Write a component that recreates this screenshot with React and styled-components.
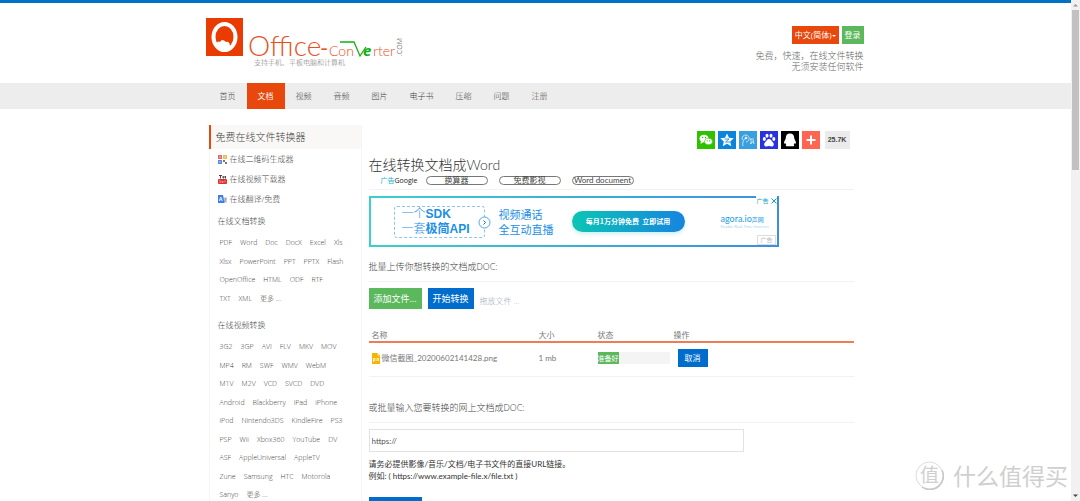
import React from "react";
import styled, { createGlobalStyle, css } from "styled-components";

const orange = "#e8480c";
const blue = "#006dcc";
const green = "#5cb85c";

const Global = createGlobalStyle`
  * { box-sizing: border-box; }
  body {
    margin: 0;
    background: #fff;
    color: #444;
    font: 300 8px/12px "Open Sans", "Noto Sans CJK SC", sans-serif;
  }
  button, input { font: inherit; border: 0; padding: 0; margin: 0; }
  button { cursor: pointer; white-space: nowrap; }
  a { color: inherit; text-decoration: none; }
  ul, h1, h2, h3, p { margin: 0; padding: 0; list-style: none; font-weight: inherit; font-size: inherit; }
`;

const Window = styled.div`
  display: flex;
  height: 100vh;
  overflow: hidden;
  position: relative;
`;

const Page = styled.div`
  flex: 1;
  min-width: 0;
  border-top: 3px solid #0072c6;
`;

const ScrollBar = styled.div`
  width: 9px;
  background: #f1f1f1;
  display: flex;
  flex-direction: column;
  align-items: center;
  padding: 3px 0;
  svg { display: block; }
`;

const Thumb = styled.div`
  width: 7px;
  height: 160px;
  margin: 3px 0 auto;
  background: #c1c1c1;
`;

const Container = styled.div`
  max-width: 656px;
  margin: 0 auto;
`;

const Header = styled(Container)`
  display: flex;
  justify-content: space-between;
  height: 80px;
  padding-top: 14px;
`;

const LogoLink = styled.a`
  margin-left: -2px;
  svg { display: block; }
`;

const HeaderSide = styled.div`
  display: flex;
  flex-direction: column;
  align-items: flex-end;
  padding-top: 9px;
`;

const HeaderButtons = styled.div`
  display: flex;
  gap: 3px;
  margin-bottom: 6px;
`;

const Button = styled.button`
  background: ${(p) => p.$bg};
  color: #fff;
  font-weight: 400;
  height: 18px;
  padding: 0 3px;
  ${(p) => p.$large && css`
    height: 21px;
    font-size: 9px;
    padding: 0 5px;
  `}
`;

const Caret = styled.span`
  display: inline-block;
  vertical-align: middle;
  border: 2px solid transparent;
  border-top-color: #fff;
  border-bottom: 0;
`;

const Slogan = styled.p`
  font-size: 9px;
  line-height: 11px;
  text-align: right;
  color: #666;
`;

const NavBar = styled.nav`
  background: #ededed;
`;

const NavList = styled(Container).attrs({ as: "ul" })`
  display: flex;
  padding-left: 1px;
`;

const NavLink = styled.a`
  display: block;
  padding: 0 11px;
  line-height: 26px;
  font-weight: ${(p) => (p.$active ? 400 : 300)};
  color: ${(p) => (p.$active ? "#fff" : "#444")};
  background: ${(p) => (p.$active ? orange : "transparent")};
`;

const Columns = styled(Container)`
  display: flex;
  align-items: flex-start;
  padding: 16px 10px 0 1px;
  gap: 7px;
`;

const Sidebar = styled.aside`
  width: 153px;
  flex: none;
  border: 1px solid #f5f5f5;
  border-top: 0;
  padding-bottom: 40px;
`;

const SideTitle = styled.h2`
  margin-left: -1px;
  border-left: 2px solid ${orange};
  background: #faf8f7;
  padding-left: 5px;
  font-size: 10px;
  line-height: 24px;
`;

const ToolLink = styled.a`
  display: flex;
  align-items: center;
  gap: 3px;
  height: 20px;
  padding-left: 8px;
  svg { display: block; flex: none; }
`;

const GroupTitle = styled.h3`
  padding: ${(p) => (p.$first ? "6px" : "11px")} 0 7px 8px;
  line-height: 12px;
`;

const TagRow = styled.li`
  display: flex;
  align-items: center;
  gap: 8px;
  height: 18px;
  padding-left: 10px;
  font-size: 7px;
  white-space: nowrap;
  &:nth-child(even) { height: 19px; }
`;

const Main = styled.main`
  flex: 1;
  min-width: 0;
`;

const Share = styled.div`
  display: flex;
  justify-content: flex-end;
  gap: 3px;
  padding: 6px 4px 5px 0;
`;

const ShareButton = styled.button`
  width: 18px;
  height: 18px;
  background: ${(p) => p.$bg};
  svg { display: block; }
`;

const Count = styled.span`
  width: 25px;
  margin-left: 2px;
  background: #ebebeb;
  color: #444;
  font: 700 7px/18px "Liberation Sans", sans-serif;
  text-align: center;
`;

const Title = styled.h1`
  font: 300 14px/22px Lato, "Noto Sans CJK SC", sans-serif;
  color: #333;
`;

const LinkUnits = styled.div`
  display: flex;
  align-items: center;
  gap: 11px;
  height: 14px;
  padding: 0 0 4px 12px;
  border-bottom: 1px solid #f2f2f2;
  margin-bottom: 6px;
`;

const AdMark = styled.span`
  width: 34px;
  font: 400 7px/9px "Open Sans", "Noto Sans CJK SC", sans-serif;
  color: #222;
  white-space: nowrap;
  b { font-weight: 400; color: #1aaed0; }
`;

const Pill = styled.a`
  width: 62px;
  height: 9px;
  border: 1px solid #777;
  border-radius: 5px;
  font: 400 8px/7px Lato, "Noto Sans CJK SC", sans-serif;
  text-align: center;
  white-space: nowrap;
`;

const Banner = styled.section`
  position: relative;
  display: flex;
  align-items: center;
  width: 410px;
  height: 51px;
  padding-left: 23px;
  border: 2px solid;
  border-image: linear-gradient(90deg, #3bd0cb, #3a8fe0) 1;
  color: #1a8fe6;
`;

const Sdk = styled.div`
  position: relative;
  width: 91px;
  height: 32px;
  padding-left: 7px;
  border: 1px dashed #8cc4ee;
  border-radius: 3px;
  font: 300 12px/15px "Liberation Sans", "Noto Sans CJK SC", sans-serif;
  white-space: nowrap;
  b { font-weight: 700; }
`;

const Arrow = styled.svg`
  position: absolute;
  right: -7px;
  top: 9px;
`;

const Talk = styled.p`
  margin: 0 18px 0 14px;
  font: 400 11px/15px "Noto Sans CJK SC", sans-serif;
`;

const Cta = styled.button`
  width: 113px;
  height: 21px;
  border-radius: 11px;
  background: linear-gradient(90deg, #0cc5b4, #1685e0);
  box-shadow: 0 2px 4px #cdeef2;
  color: #fff;
  font: 700 7px/21px "Noto Sans CJK SC", sans-serif;
`;

const Agora = styled.div`
  margin-left: 36px;
  font: 400 6px/8px "Noto Sans CJK SC", sans-serif;
  color: #22a0e4;
  b { font: 400 9px/10px Lato, sans-serif; }
  small { display: block; font: 400 4px/5px "Open Sans", sans-serif; color: #8fd0ee; }
`;

const AdChoice = styled.span`
  position: absolute;
  right: 0;
  top: -2px;
  display: flex;
  align-items: center;
  gap: 2px;
  font: 400 6px/9px "Noto Sans CJK SC", sans-serif;
  background: #fff;
  color: #12a5c4;
`;

const AdLabel = styled.span`
  position: absolute;
  right: 1px;
  bottom: 0;
  border: 1px solid #ddd;
  padding: 0 2px;
  font: 400 6px/8px "Noto Sans CJK SC", sans-serif;
  color: #bbb;
`;

const Lead = styled.label`
  display: block;
  padding: ${(p) => (p.$first ? "13px" : "24px")} 0 8px;
  border-bottom: 1px solid #f2f2f2;
  margin-bottom: 6px;
  font-size: 9px;
  line-height: 13px;
`;

const Actions = styled.div`
  display: flex;
  gap: 6px;
  align-items: center;
  margin-bottom: 21px;
`;

const Hint = styled.span`
  padding-top: 4px;
  color: #a3acbb;
`;

const FileTable = styled.table`
  width: 100%;
  table-layout: fixed;
  border-collapse: collapse;
  font: 400 8px/12px Lato, "Noto Sans CJK SC", sans-serif;
  color: #777;
  th { font-weight: 400; text-align: left; line-height: 11px; padding: 0 0 0 3px; border-bottom: 2px solid #ee7d55; }
  td { height: 34px; padding: 0 0 2px 3px; border-bottom: 1px solid #f2f2f2; }
  th:nth-child(2) { width: 59px; }
  th:nth-child(3) { width: 76px; }
  th:nth-child(4) { width: 183px; }
  td:nth-child(4) { padding-left: 7px; }
`;

const FileName = styled.span`
  display: flex;
  align-items: center;
  gap: 2px;
  svg { display: block; }
`;

const Progress = styled.div`
  width: 72px;
  background: #f4f4f4;
  color: #fff;
  font-size: 7px;
  line-height: 12px;
  span { display: block; width: 21px; background: ${green}; white-space: nowrap; }
`;

const CancelButton = styled(Button)`
  width: 30px;
`;

const UrlInput = styled.input`
  display: block;
  width: 375px;
  height: 23px;
  padding: 1px 2px 0;
  border: 1px solid #e2e2e2;
  background: #fff;
  color: #555;
  font: 400 8px/12px Lato, sans-serif;
`;

const Note = styled.p`
  padding: 6px 0 15px;
  font: 400 8px/12px Lato, "Noto Sans CJK SC", sans-serif;
  color: #333;
`;

const Watermark = styled.div`
  position: absolute;
  right: 12px;
  bottom: 9px;
  display: flex;
  align-items: center;
  gap: 9px;
  font: 400 23px/34px "Noto Sans CJK SC", sans-serif;
  color: #cfcfcf;
  svg { display: block; }
`;

const Logo = () => (
  <svg width="204" height="52" viewBox="0 0 204 52" role="img" aria-label="Office-Converter.com">
    <rect x="0" y="1" width="37" height="38" fill="#e93b02" />
    <ellipse cx="18.500" cy="20" rx="11" ry="13" fill="none" stroke="#fff" strokeWidth="4" />
    <path d="M10 29 q1-6 4-4 q2-4 6 0 q4-1 4 5 q3-3 3-4 l1 3 q-4 6-10 6 q-5 0-8-6z" fill="#fff" />
    <g fill="#e8501a" fontFamily="Lato, sans-serif" fontWeight="300">
      <text x="42" y="39" fontSize="28">Office</text>
      <text x="114" y="39" fontSize="22" fontWeight="400">-</text>
      <text x="123" y="39" fontSize="14">Con</text>
      <text x="167" y="39" fontSize="14">rter</text>
    </g>
    <path d="M134 25h14l6 14l6-9" fill="none" stroke="#12b012" strokeWidth="1.300" />
    <text x="157" y="39" fontFamily="Open Sans, sans-serif" fontWeight="700" fontStyle="italic" fontSize="15" fill="#12b012">e</text>
    <text transform="translate(196 39) rotate(-90)" fontFamily="Open Sans, sans-serif" fontSize="7" fontWeight="400" fill="#777">.COM</text>
    <text x="48" y="48" fontFamily="Noto Sans CJK SC, sans-serif" fontSize="7" fontWeight="300" fill="#777">支持手机、平板电脑和计算机</text>
  </svg>
);

const shareItems = [
  ["微信", "#2dc100", <g fill="#fff"><ellipse cx="7" cy="7.500" rx="4.500" ry="3.800" /><path d="M4 10l-.5 3 3-2z" /><ellipse cx="11.500" cy="10.500" rx="4" ry="3.300" stroke="#2dc100" strokeWidth=".6" /><g fill="#2dc100"><circle cx="5.500" cy="6.500" r=".7" /><circle cx="8.500" cy="6.500" r=".7" /><circle cx="10.200" cy="9.800" r=".6" /><circle cx="12.800" cy="9.800" r=".6" /></g></g>],
  ["QQ空间", "#0985dd", <g><path d="M9 2.500l2 4.300 4.800.5-3.600 3.200 1.100 4.700L9 12.800l-4.300 2.400 1.100-4.700-3.600-3.200 4.800-.5z" fill="#fff" /><path d="M6.500 8h4.500l-3.500 3h4.500" fill="none" stroke="#0985dd" strokeWidth=".8" /></g>],
  ["腾讯微博", "#3a9fdf", <g fill="none" stroke="#e4f4ff" strokeWidth=".8"><path d="M4 15c-1-4 1-7 3-8" /><path d="M3.500 9a3.500 3.500 0 1 1 3.500 2" /><circle cx="7" cy="7" r="1" fill="#fff" /><path d="M11 8h4M12 8v5M11 13l4-3M14 9l1 4" /></g>],
  ["百度", "#2932e1", <g fill="#fff"><ellipse cx="4.300" cy="8" rx="1.500" ry="2" /><ellipse cx="7" cy="4.800" rx="1.500" ry="2" /><ellipse cx="11" cy="4.800" rx="1.500" ry="2" /><ellipse cx="13.800" cy="8" rx="1.500" ry="2" /><path d="M9 8c2 0 2.500 2 4 3.500s.8 4-1.200 4c-1 0-1.800-.4-2.800-.4s-1.800.4-2.800.4c-2 0-2.700-2.500-1.200-4S7 8 9 8z" /></g>],
  ["QQ", "#000", <path d="M9 2.500c3 0 4.200 2 4.200 4.500 0 1 1.800 3 1.800 5 0 .8-.8.8-1.300 0-.2.700-.5 1.300-1 1.800 1 .8.500 1.500-1.200 1.500H6.500c-1.700 0-2.200-.7-1.200-1.500-.5-.5-.8-1.100-1-1.800-.5.800-1.300.8-1.300 0 0-2 1.800-4 1.800-5C4.800 4.500 6 2.500 9 2.500z" fill="#fff" />],
  ["更多分享", "#ff6550", <path d="M9 4.500v9M4.500 9h9" stroke="#fff" strokeWidth="2" />],
];

const QrIcon = () => (
  <svg width="9" height="9" viewBox="0 0 9 9">
    <rect width="4" height="4" fill="#e46a6a" /><rect x="5" width="4" height="4" fill="#eebb55" />
    <rect y="5" width="4" height="4" fill="#5b8be0" /><path d="M5 5h2v2h2v2H7V7H5z" fill="#777" />
    <path d="M1.500 1.500h1v1h-1zM6.500 1.500h1v1h-1zM1.500 6.500h1v1h-1z" fill="#fff" />
  </svg>
);
const TubeIcon = () => (
  <svg width="9" height="9" viewBox="0 0 9 9">
    <path d="M1 .5h3M2.500.5v3M5 1v2h1V1M7.500 1v2.500" stroke="#333" fill="none" strokeWidth=".9" />
    <rect y="4" width="9" height="5" rx="1" fill="#e02f2f" /><path d="M2 5v3M4 6v1.500h1V6M7 5.500v2" stroke="#fff" strokeWidth=".5" fill="none" />
  </svg>
);
const TranslateIcon = () => (
  <svg width="9" height="9" viewBox="0 0 9 9">
    <path d="M4 2h5v6H5z" fill="#dde1e6" /><path d="M6 4h3M7.500 3v1q0 2-1.500 3M6.500 5l2 2" stroke="#7a8794" strokeWidth=".6" fill="none" />
    <path d="M0 0h5l1.500 8H0z" fill="#3f7de8" /><path d="M1.300 6l1.500-4 1.500 4M1.800 4.800h2" stroke="#fff" strokeWidth=".8" fill="none" />
  </svg>
);

const tools = [
  ["在线二维码生成器", QrIcon],
  ["在线视频下载器", TubeIcon],
  ["在线翻译/免费", TranslateIcon],
];

const groups = [
  ["在线文档转换", [
    ["PDF", "Word", "Doc", "DocX", "Excel", "Xls"],
    ["Xlsx", "PowerPoint", "PPT", "PPTX", "Flash"],
    ["OpenOffice", "HTML", "ODF", "RTF"],
    ["TXT", "XML", "更多 ..."],
  ]],
  ["在线视频转换", [
    ["3G2", "3GP", "AVI", "FLV", "MKV", "MOV"],
    ["MP4", "RM", "SWF", "WMV", "WebM"],
    ["M1V", "M2V", "VCD", "SVCD", "DVD"],
    ["Android", "Blackberry", "iPad", "iPhone"],
    ["iPod", "Nintendo3DS", "KindleFire", "PS3"],
    ["PSP", "Wii", "Xbox360", "YouTube", "DV"],
    ["ASF", "AppleUniversal", "AppleTV"],
    ["Zune", "Samsung", "HTC", "Motorola"],
    ["Sanyo", "更多 ..."],
  ]],
];

const navItems = ["首页", "文档", "视频", "音频", "图片", "电子书", "压缩", "问题", "注册"];

export default function App() {
  return (
    <Window>
      <Global />
      <Page>
        <Header as="header">
          <LogoLink href="#"><Logo /></LogoLink>
          <HeaderSide>
            <HeaderButtons>
              <Button $bg={orange}>中文(简体)<Caret /></Button>
              <Button $bg={green}>登录</Button>
            </HeaderButtons>
            <Slogan>免费，快速，在线文件转换<br />无须安装任何软件</Slogan>
          </HeaderSide>
        </Header>
        <NavBar>
          <NavList>
            {navItems.map((n) => (
              <li key={n}><NavLink href="#" $active={n === "文档"}>{n}</NavLink></li>
            ))}
          </NavList>
        </NavBar>
        <Columns>
          <Sidebar>
            <SideTitle>免费在线文件转换器</SideTitle>
            {tools.map(([name, Icon]) => (
              <ToolLink href="#" key={name}><Icon />{name}</ToolLink>
            ))}
            {groups.map(([name, rows], i) => (
              <section key={name}>
                <GroupTitle $first={i === 0}>{name}</GroupTitle>
                <ul>
                  {rows.map((row) => (
                    <TagRow key={row[0]}>
                      {row.map((t) => <a href="#" key={t}>{t}</a>)}
                    </TagRow>
                  ))}
                </ul>
              </section>
            ))}
          </Sidebar>
          <Main>
            <Share>
              {shareItems.map(([name, bg, icon]) => (
                <ShareButton key={name} $bg={bg} aria-label={name}>
                  <svg width="18" height="18" viewBox="0 0 18 18">{icon}</svg>
                </ShareButton>
              ))}
              <Count>25.7K</Count>
            </Share>
            <Title>在线转换文档成Word</Title>
            <LinkUnits>
              <AdMark><b>广告</b>Google</AdMark>
              <Pill href="#">换算器</Pill>
              <Pill href="#">免费影视</Pill>
              <Pill href="#">Word document</Pill>
            </LinkUnits>
            <Banner>
              <Sdk>
                一个<b>SDK</b><br />一套<b>极简API</b>
                <Arrow width="13" height="13" viewBox="0 0 13 13">
                  <circle cx="6.500" cy="6.500" r="5.500" fill="#fff" stroke="#4aa5ea" />
                  <path d="M5.500 4.500l2 2-2 2" fill="none" stroke="#1a6fb6" />
                </Arrow>
              </Sdk>
              <Talk>视频通话<br />全互动直播</Talk>
              <Cta>每月1万分钟免费&nbsp;&nbsp;立即试用</Cta>
              <Agora><b>agora.io</b>声网<small>Enable Real-Time Internet</small></Agora>
              <AdChoice>
                广告
                <svg width="6" height="6" viewBox="0 0 6 6"><path d="M.5.5l5 5M5.500.5l-5 5" stroke="#12a5c4" /></svg>
              </AdChoice>
              <AdLabel>广告</AdLabel>
            </Banner>
            <Lead as="p" $first>批量上传你想转换的文档成DOC:</Lead>
            <Actions>
              <Button $large $bg={green}>添加文件...</Button>
              <Button $large $bg={blue}>开始转换</Button>
              <Hint>拖放文件 ...</Hint>
            </Actions>
            <FileTable>
              <thead>
                <tr><th>名称</th><th>大小</th><th>状态</th><th>操作</th></tr>
              </thead>
              <tbody>
                <tr>
                  <td>
                    <FileName>
                      <svg width="8" height="11" viewBox="0 0 8 11">
                        <path d="M0 0h5.500L8 2.500V11H0z" fill="#f5b400" /><path d="M5.500 0v2.500H8z" fill="#fbe09a" />
                        <path d="M1.500 9V5.500h1.500V7.500H1.500M5 8V5.500h1.500V8" fill="none" stroke="#fff" strokeWidth=".8" />
                      </svg>
                      微信截图_20200602141428.png
                    </FileName>
                  </td>
                  <td>1 mb</td>
                  <td><Progress><span>准备好</span></Progress></td>
                  <td><CancelButton $bg={blue}>取消</CancelButton></td>
                </tr>
              </tbody>
            </FileTable>
            <Lead htmlFor="url">或批量输入您要转换的网上文档成DOC:</Lead>
            <UrlInput id="url" defaultValue="https://" />
            <Note>请务必提供影像/音乐/文档/电子书文件的直接URL链接。<br />例如: ( https://www.example-file.x/file.txt )</Note>
            <Button $large $bg={blue}>添加文件...</Button>
          </Main>
        </Columns>
      </Page>
      <ScrollBar>
        <svg width="5" height="4" viewBox="0 0 5 4"><path d="M0 3.500L2.500 1 5 3.500z" fill="#999" /></svg>
        <Thumb />
        <svg width="5" height="4" viewBox="0 0 5 4"><path d="M0 .5L2.500 3 5 .5z" fill="#444" /></svg>
      </ScrollBar>
      <Watermark>
        <svg width="29" height="29" viewBox="0 0 29 29">
          <circle cx="14.500" cy="14.500" r="13.500" fill="#fff" stroke="#dcdcdc" />
          <path d="M27 9a13.500 13.500 0 0 1-20 17" fill="none" stroke="#c8c8c8" strokeWidth="1.500" />
          <text x="5" y="21" fontSize="19" fill="#cfcfcf">值</text>
        </svg>
        什么值得买
      </Watermark>
    </Window>
  );
}
